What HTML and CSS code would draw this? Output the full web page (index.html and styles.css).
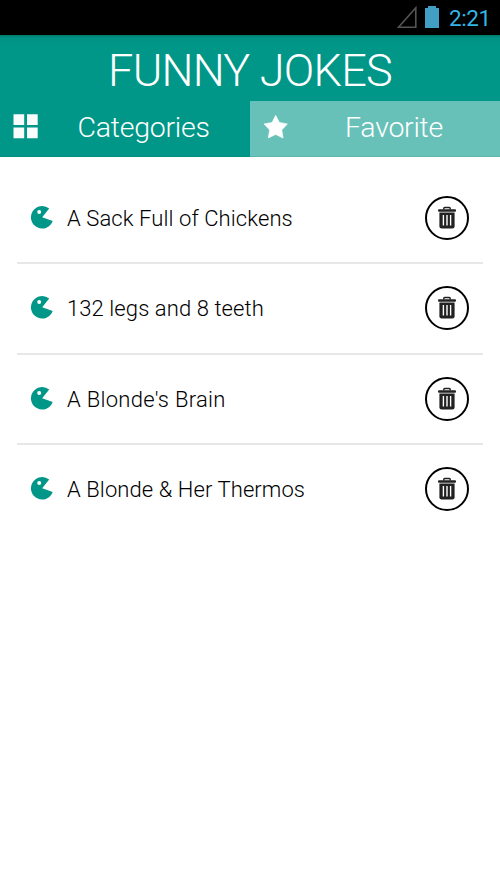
FILE: index.html
```html
<!DOCTYPE html>
<html lang="en">
<head>
<meta charset="utf-8">
<title>Funny Jokes</title>
<link rel="stylesheet" href="styles.css">
</head>
<body>
<svg width="0" height="0" class="defs">
  <symbol id="pac" viewBox="0 0 24 24">
    <path fill="#009788" d="M19.2 2.6 A11.2 11.2 0 1 0 22.7 15 L12.2 11.3 Z"/>
    <circle cx="9.2" cy="6" r="2" fill="#fff"/>
  </symbol>
  <symbol id="trash" viewBox="0 0 20 24">
    <path d="M6.8 3.4 V2.5 Q6.8 1.6 7.7 1.6 H12.3 Q13.2 1.6 13.2 2.5 V3.4" fill="none" stroke="#222" stroke-width="1.5"/>
    <rect x="1" y="3.3" width="18" height="2.4" rx="1" fill="#222"/>
    <path fill="#222" d="M2.4 6.4 H17.6 V20.3 Q17.6 22.6 15.3 22.6 H4.7 Q2.4 22.6 2.4 20.3 Z"/>
    <path d="M6.4 9 V19.4 M10 9 V19.4 M13.6 9 V19.4" stroke="#fff" stroke-width="1.4"/>
  </symbol>
</svg>
<div class="statusbar">
  <svg class="signal" width="20" height="23" viewBox="0 0 20 23"><path d="M1.5 21.3 L18.8 1.8 V21.3 Z" fill="none" stroke="#555" stroke-width="1.6"/></svg>
  <svg class="battery" width="14" height="22" viewBox="0 0 14 22"><path d="M0 2 H3 V0 H11 V2 H14 V22 H0 Z" fill="#419fc6"/></svg>
  <span class="clock">2:21</span>
</div>
<header class="header"><h1 class="title">FUNNY JOKES</h1></header>
<nav class="tabs">
  <div class="tab">
    <svg class="tab-icon" width="26" height="26" viewBox="0 0 26 26"><path fill="#f8fcfd" d="M.5 1.3h10.7V12H.5zM14 1.3h10.7V12H14zM.5 14.6h10.7v10.7H.5zM14 14.6h10.7v10.7H14z"/></svg>
    <span class="tab-label categories">Categories</span>
  </div>
  <div class="tab tab-light">
    <svg class="tab-icon" width="26" height="26" viewBox="0 0 26 26"><path fill="#fff" stroke="#fff" stroke-width=".6" stroke-linejoin="round" d="M12.7 2.3l3.7 7.2 8 1.4-5.6 6 1.3 8.2-7.4-3.6L5.3 25l1.3-8.1-5.6-6 8-1.4z"/></svg>
    <span class="tab-label favorite">Favorite</span>
  </div>
</nav>
<main class="list">
  <div class="row"><svg class="pac"><use href="#pac"/></svg><span class="joke chickens">A Sack Full of Chickens</span><span class="delete"><svg class="trash"><use href="#trash"/></svg></span></div>
  <div class="row"><svg class="pac"><use href="#pac"/></svg><span class="joke legs">132 legs and 8 teeth</span><span class="delete"><svg class="trash"><use href="#trash"/></svg></span></div>
  <div class="row"><svg class="pac"><use href="#pac"/></svg><span class="joke brain">A Blonde's Brain</span><span class="delete"><svg class="trash"><use href="#trash"/></svg></span></div>
  <div class="row"><svg class="pac"><use href="#pac"/></svg><span class="joke thermos">A Blonde &amp; Her Thermos</span><span class="delete"><svg class="trash"><use href="#trash"/></svg></span></div>
</main>
</body>
</html>
```
FILE: styles.css
```css
* { box-sizing: border-box; }
body { margin: 0; min-height: 889px; background: #fff; font-family: Roboto, "Liberation Sans", sans-serif; font-weight: 300; }
.defs { display: none; }
svg { display: block; flex: none; }
.statusbar { height: 35px; background: #000; display: flex; align-items: flex-start; padding: 6px 0 0 397px; }
.battery { margin-left: 8px; }
.clock { margin: -1px 0 0 10px; color: #33b5e5; font-size: 22.5px; line-height: 27px; font-weight: 400; letter-spacing: -.4px; white-space: nowrap; }
.header { height: 66px; background: linear-gradient(#00796d 0, #009384 3px, #009788 12px); padding-top: 8px; }
.title { margin: 0; text-align: center; color: #fff; font-size: 45px; line-height: 56px; font-weight: 300; letter-spacing: -.75px; white-space: nowrap; }
.tabs { display: flex; height: 56px; }
.tab { width: 250px; background: #009788; display: flex; padding: 12px 0 0 13px; border-bottom: 1px solid #008f81; }
.tab-light { background: #67c1b9; border-bottom-color: #5bb5ac; }
.tab-label { color: #fff; font-size: 28.5px; line-height: 34px; margin-top: -2px; letter-spacing: -.25px; white-space: nowrap; }
.categories { margin-left: 38.5px; }
.favorite { margin-left: 56px; }
.list { padding: 17px 17px 0; }
.row { height: 90.3px; display: flex; align-items: center; padding: 0 13px; border-bottom: 2px solid #e7e7e7; }
.row:last-child { border-bottom-color: transparent; }
.pac { width: 24px; height: 24px; }
.joke { margin-left: 13px; padding-top: 2px; flex: 1; color: #000; font-size: 22px; line-height: 30px; white-space: nowrap; }
.chickens, .legs, .thermos { letter-spacing: .09px; }
.brain { letter-spacing: .28px; }
.delete { width: 44px; height: 44px; border: 2px solid #000; border-radius: 50%; display: flex; align-items: center; justify-content: center; margin-right: 1px; }
.trash { width: 20px; height: 24px; }
```
